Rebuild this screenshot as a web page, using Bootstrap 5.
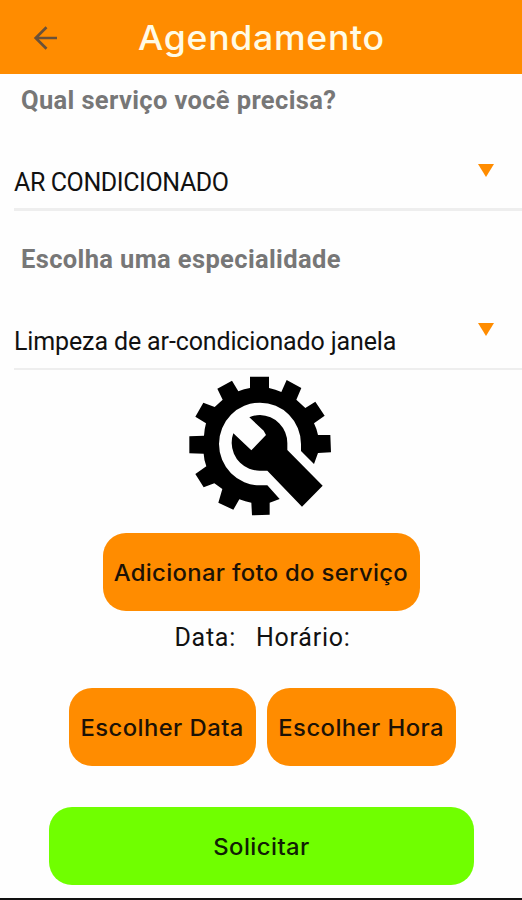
<!DOCTYPE html>
<html lang="pt-BR">
<head>
<meta charset="utf-8">
<meta name="viewport" content="width=device-width, initial-scale=1">
<title>Agendamento</title>
<link href="https://cdn.jsdelivr.net/npm/bootstrap@5.3.0/dist/css/bootstrap.min.css" rel="stylesheet">
<style>
body{font-family:Roboto,"Liberation Sans",sans-serif;background:#fefefe;color:#111}
.screen{height:900px;border-bottom:2px solid #111}
.topbar{height:74px;background:#ff8c00;padding:2px 0 0 33px}
.topbar h1{font:500 34px/44px Inter,sans-serif;letter-spacing:.7px;color:#fffbe6;margin-left:80px;white-space:nowrap;transform:scaleX(1.047);transform-origin:left}
.question{font-size:25.500px;line-height:30px;font-weight:700;letter-spacing:.36px;color:#777;padding-left:21px;margin-top:11px;white-space:nowrap}
.picker{height:96px;margin-left:14px;border-bottom:3px solid #eee;font-size:25px;line-height:30px;white-space:nowrap}
.picker .caret{margin:0 28px 24px 0}
.picker .chosen{margin-bottom:10px;letter-spacing:-.13px}
.picker .upper{letter-spacing:-.4px}
.question.second{margin-top:33px}
.picker.thin{border-bottom-width:2px}
.thin .chosen{margin-bottom:11px}
.thin .caret{margin-bottom:25px}
.gear{margin:0 auto 8px 180px}
.action{font:500 22.500px/28px Inter,sans-serif;height:78px;border-radius:23px;background:#ff8c00;color:#1c1206;padding:2px 0 0;border:0;white-space:nowrap;letter-spacing:.3px}
.action span{display:inline-block;transform:scaleX(1.06)}
.action:hover{background:#ff8c00;color:#1c1206}
.action.send,.action.send:hover{background:#70ff00;color:#102004}
.photo{width:317px}
.date{width:187px}
.date,.send{letter-spacing:.4px}
.date+.date{width:189px}
.dates{margin:35px 0 41px 2px;gap:11px}
.send{width:425px;margin-left:1px}
.when{font-size:25px;line-height:30px;letter-spacing:.75px;margin:12px 0 0 3px}
</style>
<script src="https://cdn.jsdelivr.net/npm/bootstrap@5.3.0/dist/js/bootstrap.bundle.min.js"></script>
</head>
<body>
<div class="screen d-flex flex-column overflow-hidden">
  <header class="topbar d-flex align-items-center flex-shrink-0">
    <svg width="25" height="26" viewBox="0 0 25 26" fill="none" stroke="#6b5138" stroke-width="2.7"><path d="M24 13H3M13.500 2.200L2.700 13l10.800 10.800"/></svg>
    <h1 class="mb-0">Agendamento</h1>
  </header>
  <main class="d-flex flex-column">
    <div class="question">Qual serviço você precisa?</div>
    <div class="picker d-flex align-items-end justify-content-between">
      <span class="chosen upper">AR CONDICIONADO</span>
      <svg class="caret" width="16" height="20" viewBox="0 0 16 20"><path d="M0 0H16L8 13Z" fill="#ff8c00"/></svg>
    </div>
    <div class="question second">Escolha uma especialidade</div>
    <div class="picker thin d-flex align-items-end justify-content-between">
      <span class="chosen">Limpeza de ar-condicionado janela</span>
      <svg class="caret" width="16" height="20" viewBox="0 0 16 20"><path d="M0 0H16L8 13Z" fill="#ff8c00"/></svg>
    </div>
    <svg class="gear d-block" width="160" height="155" viewBox="0 0 480 465">
      <path d="M210 20H267V54Q287 58 304 66L320 30 364 54 349 89 376 114 406 95 434 137 402 160Q410 176 414 195L451 195 453 247 414 249 402 282 363 243V222A123 124 0 1 0 240 346H262L299 387 269 398V434L216 436 214 398Q196 395 178 388L160 419 115 398 127 357 103 340 71 352 46 312 79 289Q72 271 71 251L28 250V199L72 197Q73 178 78 160L46 140 70 98 104 111 128 89 112 56 156 32 175 64Q192 56 210 54Z"/>
      <path d="M208 142Q223 135 240 135A84 84 0 0 1 322 219V240L428 347 366 410 262 302H240A84 84 0 0 1 155 219Q155 203 160 190L214 241 258 195 251 182Z"/>
    </svg>
    <button class="btn action photo align-self-center"><span>Adicionar foto do serviço</span></button>
    <div class="when d-flex justify-content-center">
      <span class="me-3 pe-1">Data:</span><span>Horário:</span>
    </div>
    <div class="dates d-flex justify-content-center">
      <button class="btn action date"><span>Escolher Data</span></button>
      <button class="btn action date"><span>Escolher Hora</span></button>
    </div>
    <button class="btn action send align-self-center"><span>Solicitar</span></button>
  </main>
</div>
</body>
</html>
